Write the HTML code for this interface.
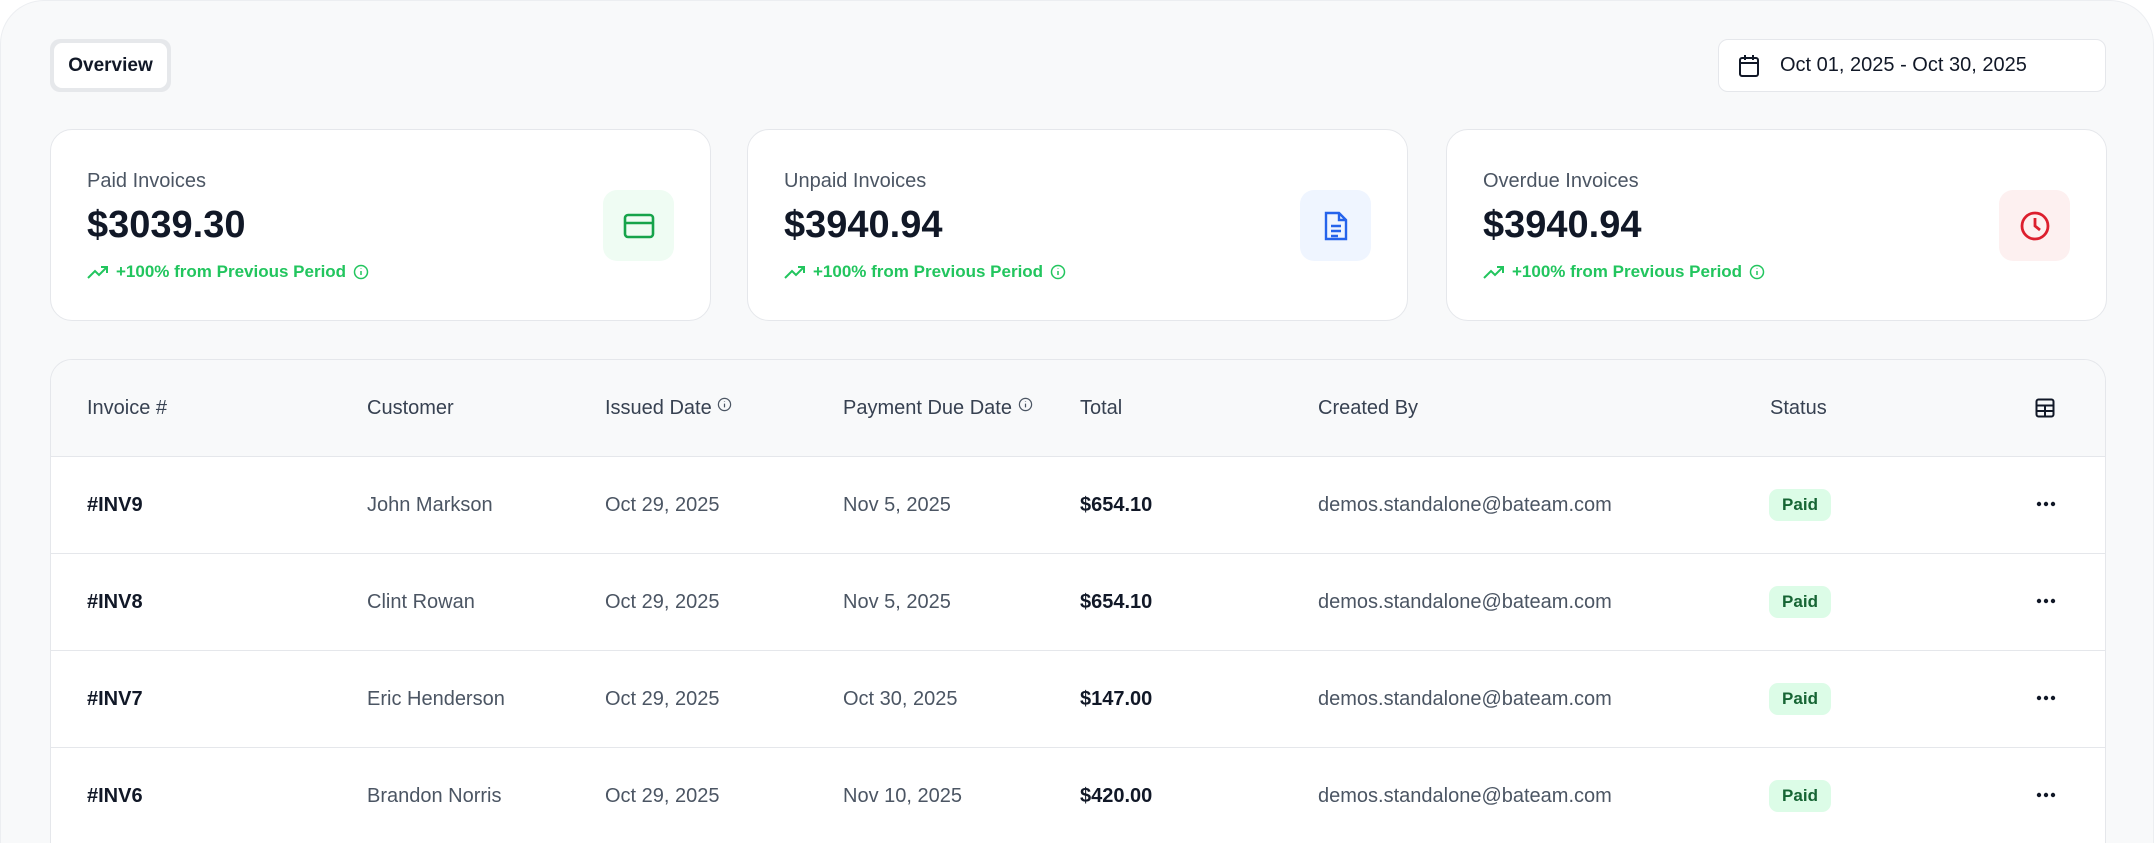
<!DOCTYPE html>
<html><head><meta charset="utf-8"><style>
*{box-sizing:border-box;margin:0;padding:0}
html,body{width:2154px;height:843px;background:#fff;overflow:hidden;font-family:"Liberation Sans",sans-serif}
.wrap{position:absolute;left:0;top:0;width:2154px;height:843px;background:#f8f9fa;border-radius:44px 44px 0 0;border:1px solid #eceef1;border-bottom:none;overflow:hidden}
.tab{position:absolute;left:49px;top:38px;width:121px;height:53px;background:#e6e8eb;border-radius:10px;padding:4px}
.tab div{background:#fff;border-radius:8px;height:100%;display:flex;align-items:center;justify-content:center;font-size:19px;font-weight:bold;color:#111827}
.date{position:absolute;left:1717px;top:38px;width:388px;height:53px;background:#fff;border:1px solid #e5e7eb;border-radius:10px;display:flex;align-items:center;padding-left:19px;font-size:20px;color:#111827}
.date svg{margin-right:20px}
.card{position:absolute;top:128px;width:661px;height:192px;background:#fff;border:1px solid #e5e7eb;border-radius:22px}
.card .t{position:absolute;left:36px;top:40px;font-size:20px;color:#4b5563}
.card .a{position:absolute;left:36px;top:74px;font-size:38px;font-weight:bold;color:#111827}
.card .tr{position:absolute;left:36px;top:132px;font-size:17px;font-weight:bold;color:#22c55e;display:flex;align-items:center;gap:7px}
.card .ic{position:absolute;right:36px;top:60px;width:71px;height:71px;border-radius:14px;display:flex;align-items:center;justify-content:center}
.tbl{position:absolute;left:49px;top:358px;width:2056px;height:485px;background:#fff;border:1px solid #e5e7eb;border-bottom:none;border-radius:22px 22px 0 0;overflow:hidden}
.row{position:absolute;left:0;width:100%;height:97px;border-bottom:1px solid #e5e7eb}
.row span{position:absolute;top:0;line-height:97px;font-size:20px;color:#4b5563;white-space:nowrap}
.hd{background:#f8f9fa;top:0}
.hd span{color:#374151}
.b{font-weight:bold;color:#111827!important}
.badge{position:absolute;left:1718px;top:32px;width:62px;height:32px;background:#dcfce7;border-radius:9px;color:#166534;font-size:17px;font-weight:bold;text-align:center;line-height:32px}
.dots{position:absolute;left:1985px;top:44px}
</style></head><body>
<div class="wrap">
<div class="tab"><div>Overview</div></div>
<div class="date"><svg width="22" height="24" viewBox="0 0 22 24" fill="none" stroke="#111827" stroke-width="2"><rect x="2" y="4" width="18" height="18" rx="2"/><path d="M2 9h18M7 1v5M15 1v5"/></svg>Oct 01, 2025 - Oct 30, 2025</div>

<div class="card" style="left:49px"><div class="t">Paid Invoices</div><div class="a">$3039.30</div>
<div class="tr"><svg width="22" height="16" viewBox="0 0 22 16" fill="none" stroke="#22c55e" stroke-width="2"><path d="M1 14l7-7 4 4 8-8M14 3h6v6"/></svg>+100% from Previous Period <svg width="16" height="16" viewBox="0 0 16 16" fill="none" stroke="#22c55e" stroke-width="1.5"><circle cx="8" cy="8" r="6.5"/><path d="M8 7v4M8 4.5v.5"/></svg></div>
<div class="ic" style="background:#effcf3"><svg width="32" height="26" viewBox="0 0 32 26" fill="none" stroke="#16a34a" stroke-width="2.6"><rect x="2" y="2" width="28" height="22" rx="3"/><path d="M2 10h28"/></svg></div></div>

<div class="card" style="left:746px"><div class="t">Unpaid Invoices</div><div class="a">$3940.94</div>
<div class="tr"><svg width="22" height="16" viewBox="0 0 22 16" fill="none" stroke="#22c55e" stroke-width="2"><path d="M1 14l7-7 4 4 8-8M14 3h6v6"/></svg>+100% from Previous Period <svg width="16" height="16" viewBox="0 0 16 16" fill="none" stroke="#22c55e" stroke-width="1.5"><circle cx="8" cy="8" r="6.5"/><path d="M8 7v4M8 4.5v.5"/></svg></div>
<div class="ic" style="background:#eff5ff"><svg width="26" height="32" viewBox="0 0 26 32" fill="none" stroke="#2563eb" stroke-width="2.4"><path d="M3 3h13l7 7v19H3z M16 3v7h7M8 16h10M8 21h10M8 26h7"/></svg></div></div>

<div class="card" style="left:1445px"><div class="t">Overdue Invoices</div><div class="a">$3940.94</div>
<div class="tr"><svg width="22" height="16" viewBox="0 0 22 16" fill="none" stroke="#22c55e" stroke-width="2"><path d="M1 14l7-7 4 4 8-8M14 3h6v6"/></svg>+100% from Previous Period <svg width="16" height="16" viewBox="0 0 16 16" fill="none" stroke="#22c55e" stroke-width="1.5"><circle cx="8" cy="8" r="6.5"/><path d="M8 7v4M8 4.5v.5"/></svg></div>
<div class="ic" style="background:#fdf0f0"><svg width="32" height="32" viewBox="0 0 32 32" fill="none" stroke="#dc1f2e" stroke-width="2.8"><circle cx="16" cy="16" r="13"/><path d="M16 8v8l5 4"/></svg></div></div>

<div class="tbl">
<div class="row hd"><span style="left:36px">Invoice #</span><span style="left:316px">Customer</span><span style="left:554px">Issued Date <svg width="15" height="15" viewBox="0 0 16 16" fill="none" stroke="#4b5563" stroke-width="1.3" style="vertical-align:2px"><circle cx="8" cy="8" r="6.5"/><path d="M8 7v4M8 4.5v.5"/></svg></span><span style="left:792px">Payment Due Date <svg width="15" height="15" viewBox="0 0 16 16" fill="none" stroke="#4b5563" stroke-width="1.3" style="vertical-align:2px"><circle cx="8" cy="8" r="6.5"/><path d="M8 7v4M8 4.5v.5"/></svg></span><span style="left:1029px">Total</span><span style="left:1267px">Created By</span><span style="left:1719px">Status</span>
<svg style="position:absolute;left:1984px;top:38px" width="20" height="20" viewBox="0 0 20 20" fill="none" stroke="#111827" stroke-width="2"><rect x="1.5" y="1.5" width="17" height="17" rx="2"/><path d="M1.5 7.5h17M1.5 13h17M10 7.5v11"/></svg></div>

<div class="row" style="top:97px"><span class="b" style="left:36px">#INV9</span><span style="left:316px">John Markson</span><span style="left:554px">Oct 29, 2025</span><span style="left:792px">Nov 5, 2025</span><span class="b" style="left:1029px">$654.10</span><span style="left:1267px">demos.standalone@bateam.com</span><div class="badge">Paid</div><svg class="dots" width="20" height="6" viewBox="0 0 20 6" fill="#111827"><circle cx="3" cy="3" r="2.2"/><circle cx="10" cy="3" r="2.2"/><circle cx="17" cy="3" r="2.2"/></svg></div>
<div class="row" style="top:194px"><span class="b" style="left:36px">#INV8</span><span style="left:316px">Clint Rowan</span><span style="left:554px">Oct 29, 2025</span><span style="left:792px">Nov 5, 2025</span><span class="b" style="left:1029px">$654.10</span><span style="left:1267px">demos.standalone@bateam.com</span><div class="badge">Paid</div><svg class="dots" width="20" height="6" viewBox="0 0 20 6" fill="#111827"><circle cx="3" cy="3" r="2.2"/><circle cx="10" cy="3" r="2.2"/><circle cx="17" cy="3" r="2.2"/></svg></div>
<div class="row" style="top:291px"><span class="b" style="left:36px">#INV7</span><span style="left:316px">Eric Henderson</span><span style="left:554px">Oct 29, 2025</span><span style="left:792px">Oct 30, 2025</span><span class="b" style="left:1029px">$147.00</span><span style="left:1267px">demos.standalone@bateam.com</span><div class="badge">Paid</div><svg class="dots" width="20" height="6" viewBox="0 0 20 6" fill="#111827"><circle cx="3" cy="3" r="2.2"/><circle cx="10" cy="3" r="2.2"/><circle cx="17" cy="3" r="2.2"/></svg></div>
<div class="row" style="top:388px"><span class="b" style="left:36px">#INV6</span><span style="left:316px">Brandon Norris</span><span style="left:554px">Oct 29, 2025</span><span style="left:792px">Nov 10, 2025</span><span class="b" style="left:1029px">$420.00</span><span style="left:1267px">demos.standalone@bateam.com</span><div class="badge">Paid</div><svg class="dots" width="20" height="6" viewBox="0 0 20 6" fill="#111827"><circle cx="3" cy="3" r="2.2"/><circle cx="10" cy="3" r="2.2"/><circle cx="17" cy="3" r="2.2"/></svg></div>
</div>
</div>
</body></html>
